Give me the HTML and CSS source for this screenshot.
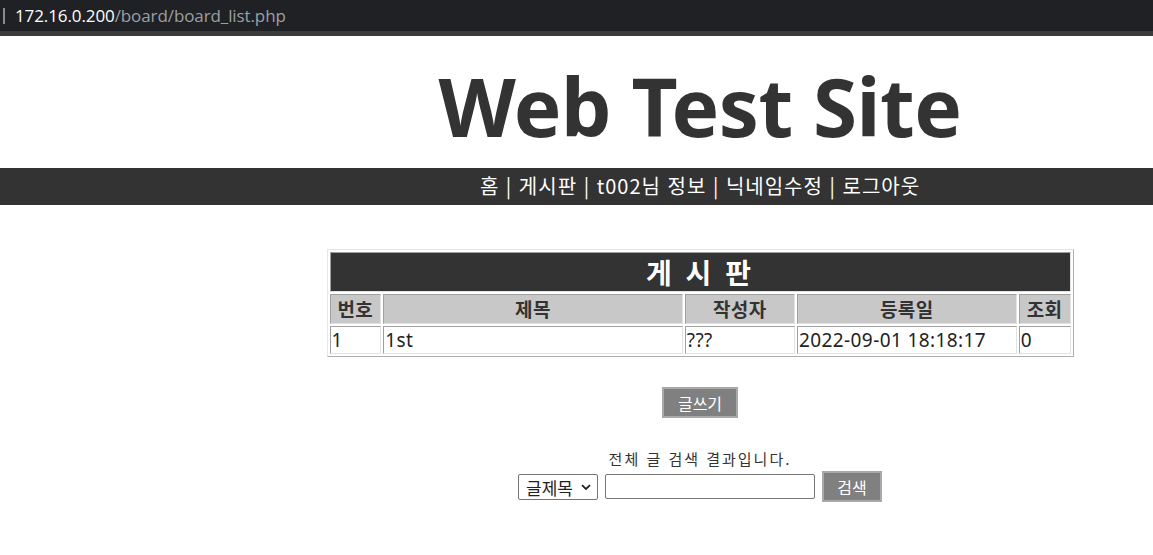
FILE: index.html
```html
<!DOCTYPE html>
<html lang="ko">
<head>
<meta charset="utf-8">
<title>board_list</title>
<link rel="stylesheet" href="styles.css">
</head>
<body>
<div class="urlbar">
  <span class="caret"></span>
  <span class="host">172.16.0.200</span><span class="path">/board/board_list.php</span>
</div>
<div class="urlline"></div>
<header class="site-head">
  <h1 class="site-title">Web Test Site</h1>
</header>
<nav class="menu">
  <div class="menu-inner">홈 | 게시판 | t002님 정보 | 닉네임수정 | 로그아웃</div>
</nav>
<main class="content">
  <table class="board" border="1">
    <tr><th colspan="5" class="board-title">게 시 판</th></tr>
    <tr class="head">
      <th class="c-no">번호</th>
      <th class="c-subj">제목</th>
      <th class="c-writer">작성자</th>
      <th class="c-date">등록일</th>
      <th class="c-hit">조회</th>
    </tr>
    <tr class="row">
      <td>1</td>
      <td>1st</td>
      <td>???</td>
      <td>2022-09-01 18:18:17</td>
      <td>0</td>
    </tr>
  </table>
  <div class="write-wrap"><button class="gbtn write">글쓰기</button></div>
  <p class="result">전체 글 검색 결과입니다.</p>
  <form class="search">
    <span class="sel-wrap">
      <select class="sel"><option>글제목</option></select>
      <svg class="chev" width="10" height="7" viewBox="0 0 10 7"><path d="M1 1.2 L5 5 L9 1.2" fill="none" stroke="#222" stroke-width="1.8"/></svg>
    </span>
    <input class="query" type="text">
    <button type="button" class="gbtn find">검색</button>
  </form>
</main>
</body>
</html>
```
FILE: styles.css
```css
html, body {
  margin: 0;
  padding: 0;
  background: #fff;
}
body {
  font-family: "Noto Sans CJK KR", "Noto Sans", sans-serif;
  color: #222;
}
.urlbar {
  height: 31px;
  background: #202124;
  display: flex;
  align-items: center;
  font-family: "Open Sans", "Noto Sans", sans-serif;
  font-size: 17px;
  letter-spacing: -0.1px;
}
.caret {
  width: 2px;
  height: 16px;
  background: #8a8a8a;
  margin-left: 3px;
  margin-right: 10px;
}
.host { color: #fff; }
.path { color: #9aa0a6; }
.urlline {
  height: 5px;
  background: #3a3b3d;
}
.site-head {
  padding-left: 247px;
  text-align: center;
  height: 132px;
}
.site-title {
  margin: 0;
  padding-top: 20px;
  font-family: "Noto Sans", "Open Sans", sans-serif;
  font-weight: 700;
  font-size: 80px;
  line-height: 100px;
  color: #333;
  letter-spacing: -0.5px;
}
.menu {
  background: #333;
  height: 37px;
}
.menu-inner {
  padding-left: 247px;
  text-align: center;
  color: #fff;
  font-size: 20px;
  letter-spacing: 1px;
  line-height: 36px;
}
.content {
  padding-left: 247px;
  padding-top: 44px;
  display: flex;
  flex-direction: column;
  align-items: center;
}
.board {
  width: 747px;
  border-collapse: separate;
  border-spacing: 2px;
  border: 1px solid;
  border-color: #e6e6e6 #b0b0b0 #b0b0b0 #e6e6e6;
}
.board th, .board td {
  border: 1px solid;
  border-color: #a0a0a0 #e2e2e2 #e2e2e2 #a0a0a0;
  padding: 0 1px;
}
.board-title {
  background: #333;
  color: #fff;
  font-size: 28px;
  font-weight: 700;
  letter-spacing: 3px;
  height: 38px;
  line-height: 38px;
}
.head th {
  background: #c8c8c8;
  color: #333;
  font-size: 19px;
  font-weight: 700;
  letter-spacing: 0.5px;
  height: 28px;
  line-height: 26px;
}
.c-no { width: 48px; }
.c-subj { width: 298px; }
.c-writer { width: 107px; }
.c-date { width: 217px; }
.c-hit { width: 48px; }
.row td {
  font-family: "Noto Sans", "Noto Sans CJK KR", sans-serif;
  font-size: 19px;
  letter-spacing: 0.4px;
  height: 26px;
  line-height: 26px;
  color: #222;
  text-align: left;
}
.gbtn {
  background: #808080;
  color: #fff;
  border: 2px solid #a9a9a9;
  font-family: "Noto Sans CJK KR", sans-serif;
  font-size: 16px;
  padding: 0;
}
.write-wrap {
  margin-top: 30px;
}
.write {
  width: 76px;
  height: 31px;
}
.result {
  margin: 32px 0 0;
  font-size: 15px;
  line-height: 18px;
  color: #333;
  letter-spacing: 2px;
}
.search {
  margin-top: 3px;
  display: flex;
  align-items: center;
  gap: 7px;
}
.sel-wrap {
  position: relative;
  display: inline-flex;
}
.sel {
  appearance: none;
  -webkit-appearance: none;
  width: 80px;
  height: 26px;
  padding: 0 0 0 7px;
  font-family: "Noto Sans CJK KR", sans-serif;
  font-size: 17px;
  color: #222;
  border: 1px solid #767676;
  border-radius: 2px;
  background: #fff;
}
.chev {
  position: absolute;
  right: 7px;
  top: 10px;
  pointer-events: none;
}
.query {
  width: 204px;
  height: 21px;
  border: 1px solid #767676;
  border-radius: 2px;
  padding: 1px 2px;
}
.find {
  width: 60px;
  height: 31px;
}
```
